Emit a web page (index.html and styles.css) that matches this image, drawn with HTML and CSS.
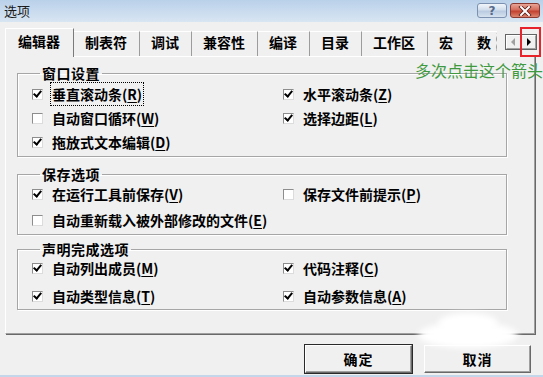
FILE: index.html
```html
<!DOCTYPE html>
<html lang="zh-CN">
<head>
<meta charset="utf-8">
<title>选项</title>
<link rel="stylesheet" href="styles.css">
</head>
<body>
<div class="window">
  <div class="titlebar">
    <span class="title">选项</span>
    <div class="caption-buttons">
      <span class="cap-btn help">?</span>
      <span class="cap-btn close">
        <svg width="14" height="10" viewBox="0 0 14 10"><path d="M3 1 L11 9 M11 1 L3 9" stroke="#5a1f18" stroke-width="3.6" stroke-linecap="square"/><path d="M3 1 L11 9 M11 1 L3 9" stroke="#fff" stroke-width="2" stroke-linecap="square"/></svg>
      </span>
    </div>
  </div>
  <div class="client">
    <div class="tabstrip">
      <div class="tab active">编辑器</div>
      <div class="tab">制表符</div>
      <div class="tab">调试</div>
      <div class="tab">兼容性</div>
      <div class="tab">编译</div>
      <div class="tab">目录</div>
      <div class="tab">工作区</div>
      <div class="tab">宏</div>
      <div class="tab clipped"><span>数</span><svg class="wave" width="5" height="18" viewBox="0 0 5 18"><path d="M2 0 C4 3 0 5 2 8 C4 11 0 13 2 16 L2 18" stroke="#9a9a9a" fill="none"/></svg></div>
      <div class="scroller">
        <span class="arrow-btn"><svg width="5" height="8" viewBox="0 0 5 8"><path d="M4 0 L0 4 L4 8 Z" fill="#a0a0a0"/></svg></span>
        <span class="arrow-btn"><svg width="5" height="8" viewBox="0 0 5 8"><path d="M1 0 L5 4 L1 8 Z" fill="#000"/></svg></span>
      </div>
    </div>
    <div class="panel">
      <fieldset class="group g1">
        <legend>窗口设置</legend>
        <div class="rows">
          <div class="opt"><span class="cb on"></span><span class="txt focus">垂直滚动条(<u>R</u>)</span></div>
          <div class="opt"><span class="cb on"></span><span class="txt">水平滚动条(<u>Z</u>)</span></div>
          <div class="opt"><span class="cb"></span><span class="txt">自动窗口循环(<u>W</u>)</span></div>
          <div class="opt"><span class="cb on"></span><span class="txt">选择边距(<u>L</u>)</span></div>
          <div class="opt"><span class="cb on"></span><span class="txt">拖放式文本编辑(<u>D</u>)</span></div>
        </div>
      </fieldset>
      <fieldset class="group g2">
        <legend>保存选项</legend>
        <div class="rows">
          <div class="opt"><span class="cb on"></span><span class="txt">在运行工具前保存(<u>V</u>)</span></div>
          <div class="opt"><span class="cb"></span><span class="txt">保存文件前提示(<u>P</u>)</span></div>
          <div class="opt span2"><span class="cb"></span><span class="txt">自动重新载入被外部修改的文件(<u>E</u>)</span></div>
        </div>
      </fieldset>
      <fieldset class="group g3">
        <legend>声明完成选项</legend>
        <div class="rows">
          <div class="opt"><span class="cb on"></span><span class="txt">自动列出成员(<u>M</u>)</span></div>
          <div class="opt"><span class="cb on"></span><span class="txt">代码注释(<u>C</u>)</span></div>
          <div class="opt"><span class="cb on"></span><span class="txt">自动类型信息(<u>T</u>)</span></div>
          <div class="opt"><span class="cb on"></span><span class="txt">自动参数信息(<u>A</u>)</span></div>
        </div>
      </fieldset>
    </div>
    <div class="buttons">
      <div class="btn default">确定</div>
      <div class="btn">取消</div>
    </div>
  </div>
</div>
<div class="annotation">多次点击这个箭头</div>
<div class="highlight"></div>
<div class="smudge s1"></div>
<div class="smudge s2"></div>
</body>
</html>
```
FILE: styles.css
```css
* { box-sizing: border-box; }
html, body { margin: 0; padding: 0; }
body {
  width: 543px;
  height: 377px;
  overflow: hidden;
  position: relative;
  background: #f0f0f0;
  font-family: "Noto Sans CJK SC", "Noto Sans", sans-serif;
  font-size: 14px;
  color: #000;
}
.window {
  height: 377px;
  display: flex;
  flex-direction: column;
  border-bottom: 2px solid #c4d6ea;
}
.titlebar {
  height: 22px;
  flex: none;
  display: flex;
  align-items: flex-start;
  padding: 0 3px 0 4px;
  background: linear-gradient(#bad1ea, #d8e5f2);
}
.title {
  font-size: 13px;
  line-height: 22px;
  color: #1a1a1a;
}
.caption-buttons {
  margin-left: auto;
  margin-top: 3px;
  display: flex;
  gap: 3px;
}
.cap-btn {
  width: 30px;
  height: 15px;
  border-radius: 3px;
  display: flex;
  align-items: center;
  justify-content: center;
}
.help {
  border: 1px solid #7b91af;
  background: linear-gradient(#f1f5fa, #d2deec 45%, #b9cbe1 55%, #d6e2ef);
  color: #56698a;
  font-family: "DejaVu Sans", sans-serif;
  font-size: 12px;
  font-weight: bold;
  line-height: 1;
}
.close {
  border: 1px solid #8b3a33;
  background: linear-gradient(#e8a596, #d46c5d 45%, #c2412f 55%, #dc856f);
}
.client {
  flex: 1;
  display: flex;
  flex-direction: column;
}
.tabstrip {
  height: 34px;
  flex: none;
  display: flex;
  align-items: flex-end;
  padding-left: 5px;
}
.tab {
  height: 25px;
  padding: 0 12px 0 11px;
  line-height: 20px;
  font-weight: 700;
  white-space: nowrap;
  border-top: 1px solid #fff;
  border-right: 1px solid #9c9c9c;
}
.tab.active {
  height: 29px;
  margin-bottom: -1px;
  padding: 2px 13px 0 12px;
  border-left: 1px solid #fff;
  border-right: 1px solid #7a7a7a;
  background: #f0f0f0;
  position: relative;
  z-index: 1;
}
.tab.clipped {
  width: 31px;
  overflow: hidden;
  border-right: none;
  padding-right: 0;
  display: flex;
  align-items: flex-start;
  gap: 4px;
}
.wave { margin-top: 1px; flex: none; }
.scroller {
  margin-left: auto;
  margin-right: 6px;
  margin-bottom: 6px;
  height: 16px;
  display: flex;
  border: 1px solid #646464;
  background: #f0f0f0;
}
.arrow-btn {
  width: 15px;
  height: 14px;
  display: flex;
  align-items: center;
  justify-content: center;
  border-top: 1px solid #fff;
  border-left: 1px solid #fff;
  border-right: 1px solid #a0a0a0;
  border-bottom: 1px solid #a0a0a0;
}
.panel {
  width: 530px;
  height: 278px;
  flex: none;
  margin-left: 5px;
  padding: 0 0 0 11px;
  border-top: 1px solid #fff;
  border-left: 1px solid #fff;
  border-right: 1px solid #a0a0a0;
  border-bottom: 1px solid #a0a0a0;
  box-shadow: 1px 1px 0 #696969;
}
.group {
  width: 490px;
  margin: 0;
  padding: 2px 0 2px 14px;
  border: 1px solid #a6a6a6;
  box-shadow: inset 1px 1px 0 #fff, 1px 1px 0 #fff;
}
.group legend {
  margin-left: 8px;
  padding: 0 2px;
  font-weight: 700;
  letter-spacing: 0.5px;
  line-height: 14px;
}
.g1 { margin-top: 9px; }
.g2 { margin-top: 10px; padding-top: 0; padding-bottom: 1px; }
.g3 { margin-top: 7px; padding-top: 0; padding-bottom: 1px; }
.rows {
  display: grid;
  grid-template-columns: 251px auto;
  grid-auto-rows: 24px;
}
.g2 .rows { grid-auto-rows: 26px; }
.g3 .rows { row-gap: 4px; }
.opt {
  display: flex;
  align-items: center;
  gap: 9px;
  font-weight: 700;
  white-space: nowrap;
}
.span2 { grid-column: 1 / -1; }
.cb {
  width: 11px;
  height: 11px;
  flex: none;
  border: 1px solid;
  border-color: #8d8d8d #dcdcdc #dcdcdc #8d8d8d;
  background: #fff;
  display: flex;
  align-items: center;
  justify-content: center;
}
.cb.on::before {
  content: "";
  width: 3px;
  height: 6px;
  margin-top: -2px;
  border-right: 2px solid #000;
  border-bottom: 2px solid #000;
  transform: rotate(40deg);
}
.txt u { text-decoration-thickness: 1px; text-underline-offset: 2px; }
.focus {
  outline: 1px dotted #000;
  outline-offset: 1px;
}
.buttons {
  margin-top: 11px;
  display: flex;
  justify-content: flex-end;
  gap: 12px;
  padding-right: 12px;
}
.btn {
  width: 107px;
  height: 28px;
  display: flex;
  align-items: center;
  justify-content: center;
  font-size: 14px;
  font-weight: 700;
  letter-spacing: 1px;
  background: #f0f0f0;
  border: 1px solid;
  border-color: #fff #696969 #696969 #fff;
  box-shadow: inset -1px -1px 0 #a0a0a0;
}
.btn.default {
  box-shadow: 0 0 0 1px #2a2a2a, inset -1px -1px 0 #a0a0a0;
}
.annotation {
  position: absolute;
  left: 415px;
  top: 60px;
  font-size: 16px;
  line-height: 20px;
  color: #3f9a3f;
  white-space: nowrap;
}
.highlight {
  position: absolute;
  left: 520px;
  top: 27px;
  width: 21px;
  height: 30px;
  border: 2.5px solid #e8232a;
}
.smudge {
  position: absolute;
  background: #fff;
  border-radius: 50%;
  filter: blur(3px);
}
.s1 { left: 418px; top: 322px; width: 100px; height: 26px; }
.s2 { left: 438px; top: 313px; width: 60px; height: 20px; }
```
